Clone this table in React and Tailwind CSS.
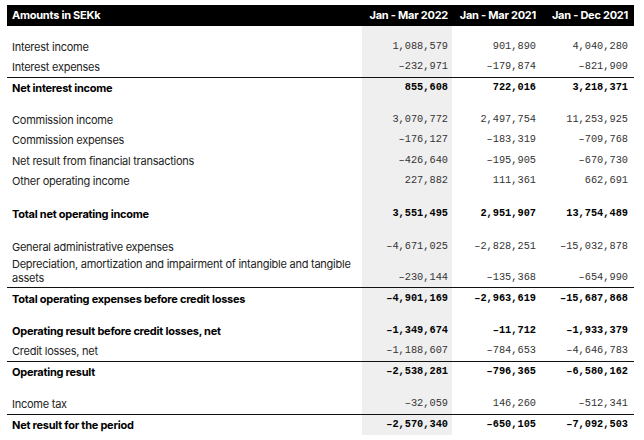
const rows = [
  { sp: 11 },
  { label: 'Interest income', v: ['1,088,579', '901,890', '4,040,280'] },
  { label: 'Interest expenses', v: ['–232,971', '–179,874', '–821,909'], line: true },
  { label: 'Net interest income', v: ['855,608', '722,016', '3,218,371'], bold: true },
  { sp: 12 },
  { label: 'Commission income', v: ['3,070,772', '2,497,754', '11,253,925'] },
  { label: 'Commission expenses', v: ['–176,127', '–183,319', '–709,768'] },
  { label: 'Net result from financial transactions', v: ['–426,640', '–195,905', '–670,730'], h: 21 },
  { label: 'Other operating income', v: ['227,882', '111,361', '662,691'] },
  { sp: 13 },
  { label: 'Total net operating income', v: ['3,551,495', '2,951,907', '13,754,489'] , bold: true },
  { sp: 13 },
  { label: 'General administrative expenses', v: ['–4,671,025', '–2,828,251', '–15,032,878'] },
  { label: 'Depreciation, amortization and impairment of intangible and tangible assets', v: ['–230,144', '–135,368', '–654,990'], line: true, tall: true },
  { label: 'Total operating expenses before credit losses', v: ['–4,901,169', '–2,963,619', '–15,687,868'], bold: true, h: 21 },
  { sp: 12 },
  { label: 'Operating result before credit losses, net', v: ['–1,349,674', '–11,712', '–1,933,379'], bold: true },
  { label: 'Credit losses, net', v: ['–1,188,607', '–784,653', '–4,646,783'], line: true },
  { label: 'Operating result', v: ['–2,538,281', '–796,365', '–6,580,162'], bold: true },
  { sp: 12 },
  { label: 'Income tax', v: ['–32,059', '146,260', '–512,341'], line: true },
  { label: 'Net result for the period', v: ['–2,570,340', '–650,105', '–7,092,503'], bold: true },
];

const sans = { fontFamily: 'Inter, "Liberation Sans", sans-serif', letterSpacing: '-0.25px' };
const mono = { fontFamily: '"Liberation Mono", "DejaVu Sans Mono", monospace' };

function Row({ r }) {
  if (r.sp) {
    return (
      <div className="flex" style={{ height: r.sp }}>
        <div className="flex-1" />
        <div className="w-[90px] bg-[#efefef]" />
        <div className="w-[88px]" />
        <div className="w-[94px]" />
      </div>
    );
  }
  const h = r.tall ? 'h-[30px] items-end pb-[2px]' : r.h === 21 ? 'h-[21px] items-center' : 'h-[20px] items-center';
  const line = r.line ? 'border-b border-[#111]' : '';
  const num = r.bold ? 'font-bold text-black' : 'text-[#333]';
  return (
    <div className={`flex ${line}`}>
      <div className={`flex flex-1 ${h} pl-[5px] pr-1 text-[11px] leading-[14px] ${r.bold ? 'font-bold text-black' : 'text-[#222]'}`} style={sans}>
        {r.label}
      </div>
      <div className={`flex ${h} w-[90px] justify-end bg-[#efefef] pr-[4px] text-[10.3px] ${num}`} style={mono}>{r.v[0]}</div>
      <div className={`flex ${h} w-[88px] justify-end pr-[4px] text-[10.3px] ${num}`} style={mono}>{r.v[1]}</div>
      <div className={`flex ${h} w-[94px] justify-end pr-[6px] text-[10.3px] ${num}`} style={mono}>{r.v[2]}</div>
    </div>
  );
}

export default function App() {
  return (
    <div className="h-[440px] w-[644px] bg-white pl-[7px] pr-[10px] pt-[5px]">
      <div className="flex h-[21px] items-center bg-black text-[11px] font-bold text-white" style={sans}>
        <div className="flex-1 pl-[5px]">Amounts in SEKk</div>
        <div className="w-[90px] pr-[4px] text-right">Jan - Mar 2022</div>
        <div className="w-[88px] pr-[4px] text-right">Jan - Mar 2021</div>
        <div className="w-[94px] pr-[6px] text-right">Jan - Dec 2021</div>
      </div>
      {rows.map((r, i) => <Row key={i} r={r} />)}
    </div>
  );
}
